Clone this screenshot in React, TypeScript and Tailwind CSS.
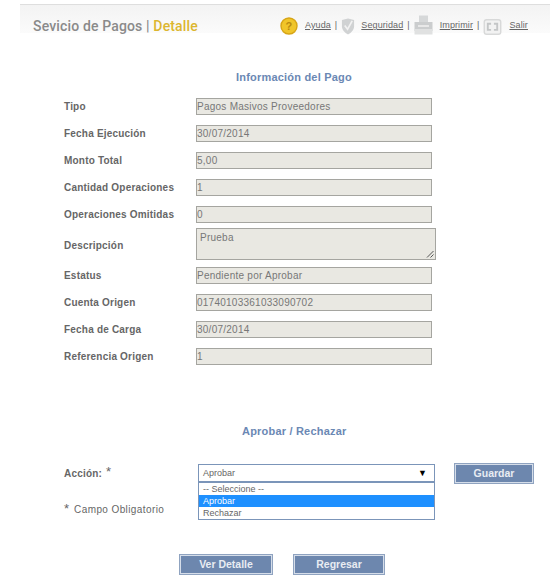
const fields = [
  { label: 'Tipo', value: 'Pagos Masivos Proveedores' },
  { label: 'Fecha Ejecución', value: '30/07/2014' },
  { label: 'Monto Total', value: '5,00' },
  { label: 'Cantidad Operaciones', value: '1' },
  { label: 'Operaciones Omitidas', value: '0' },
];

const fieldsAfter = [
  { label: 'Estatus', value: 'Pendiente por Aprobar' },
  { label: 'Cuenta Origen', value: '01740103361033090702' },
  { label: 'Fecha de Carga', value: '30/07/2014' },
  { label: 'Referencia Origen', value: '1' },
];

function Field({ label, value }: { label: string; value: string }) {
  return (
    <div className="flex items-center h-[17px]">
      <div className="w-[132px] text-[10px] font-bold text-[#666] tracking-[0.2px]">{label}</div>
      <div className="w-[236px] h-[17px] bg-[#e9e8e2] border border-[#a5a5a0] text-[10px] leading-[15px] text-[#777] tracking-[0.25px] overflow-hidden">
        {value}
      </div>
    </div>
  );
}

function PageButton({ label, width }: { label: string; width: string }) {
  return (
    <button
      type="button"
      className={`${width} h-[21px] block bg-[#6d87ae] border-2 border-[#d5dde9] outline outline-1 outline-[#8fa3c0] -outline-offset-1 text-[10.5px] font-bold text-[#e8ecf2] leading-none`}
    >
      {label}
    </button>
  );
}

export default function App() {
  return (
    <div className="w-[550px] h-[581px] bg-white overflow-hidden font-['Liberation_Sans',Arial,sans-serif]">
      <div className="ml-[20px] mt-[4px] h-[29px] border-t border-[#dedede] bg-gradient-to-b from-[#f3f3f3] to-[#fbfbfb] flex">
        <div className="pl-[13px] pt-[11px] w-[260px] text-[14px] font-medium tracking-[0.15px] leading-[20px] text-[#8a8a8a] font-['Roboto',sans-serif] whitespace-nowrap">
          Sevicio de Pagos | <span className="text-[#dcb62f]">Detalle</span>
        </div>
        <div className="flex items-start pt-[12px] text-[9px] tracking-[0.1px] text-[#666]">
          <svg width="18" height="18" viewBox="0 0 18 18" className="shrink-0">
            <circle cx="9" cy="9" r="8" fill="#f0c52a" stroke="#d7a516" strokeWidth="1.4" />
            <text x="9" y="13" textAnchor="middle" fontSize="11" fontWeight="700" fill="#b98a10" fontFamily="Liberation Sans">?</text>
          </svg>
          <a className="underline ml-[7px] mt-[2px] leading-[12px]">Ayuda</a>
          <span className="ml-[4px] mt-[2px] leading-[12px]">|</span>
          <svg width="14" height="17" viewBox="0 0 15 18" className="ml-[4px] mt-[1px] shrink-0">
            <path d="M1 2 L7.5 0.5 L14 2 V9 C14 13 10.5 16 7.5 17.5 C4.5 16 1 13 1 9 Z" fill="#d0d2d3" />
            <path d="M4 8 L7 12 L12 3" fill="none" stroke="#f2f2f2" strokeWidth="1.8" />
          </svg>
          <a className="underline ml-[6px] mt-[2px] leading-[12px]">Seguridad</a>
          <span className="ml-[4px] mt-[2px] leading-[12px]">|</span>
          <svg width="19" height="20" viewBox="0 0 19 20" className="ml-[4px] -mt-[2px] shrink-0">
            <rect x="5" y="0.5" width="9" height="8" fill="#d6d8d9" />
            <rect x="0.5" y="7" width="18" height="9" fill="#cbcdce" />
            <rect x="0.5" y="14" width="18" height="5.5" fill="#e0e1e1" />
            <rect x="4" y="10" width="11" height="2" fill="#e8e8e8" />
          </svg>
          <a className="underline ml-[7px] mt-[2px] leading-[12px]">Imprimir</a>
          <span className="ml-[4px] mt-[2px] leading-[12px]">|</span>
          <svg width="19" height="16" viewBox="0 0 19 17" className="ml-[4px] mt-[2px] shrink-0">
            <rect x="0.75" y="0.75" width="17.5" height="15.5" rx="2.5" fill="#f2f2f2" stroke="#d8d9d9" strokeWidth="1.5" />
            <path d="M8 5 H4.5 V11.5 H8 M11 5 H14.5 V11.5 H11" fill="none" stroke="#c4c6c7" strokeWidth="2" />
          </svg>
          <a className="underline ml-[7px] mt-[2px] leading-[12px]">Salir</a>
        </div>
      </div>

      <div className="pt-[36px] pl-[64px]">
        <h2 className="ml-[172px] h-[17px] text-[11px] font-bold leading-[17px] text-[#6b88b4] tracking-[0.2px] whitespace-nowrap">
          Información del Pago
        </h2>
        <div className="mt-[12px] flex flex-col gap-[10px]">
          {fields.map((f) => (
            <Field key={f.label} label={f.label} value={f.value} />
          ))}
        </div>
        <div className="mt-[5px] flex items-center h-[32px]">
          <div className="w-[132px] pt-[2px] text-[10px] font-bold text-[#666] tracking-[0.2px]">Descripción</div>
          <div className="relative w-[240px] h-[32px] bg-[#e9e8e2] border border-[#a5a5a0] pl-[3px] pt-[1px] text-[10px] leading-[15px] text-[#777] tracking-[0.25px]">
            Prueba
            <svg width="8" height="8" viewBox="0 0 8 8" className="absolute right-[1px] bottom-[1px]">
              <path d="M1 7.5 L7.5 1 M4.5 7.5 L7.5 4.5" stroke="#555" strokeWidth="1" />
            </svg>
          </div>
        </div>
        <div className="mt-[7px] flex flex-col gap-[10px]">
          {fieldsAfter.map((f) => (
            <Field key={f.label} label={f.label} value={f.value} />
          ))}
        </div>

        <h2 className="mt-[58px] ml-[178px] h-[17px] text-[11px] font-bold leading-[17px] text-[#6b88b4] tracking-[0.2px] whitespace-nowrap">
          Aprobar / Rechazar
        </h2>

        <div className="mt-[24px] flex items-start h-[20px]">
          <div className="w-[134px] pt-[3px] text-[10px] font-bold leading-[14px] text-[#666] tracking-[0.2px]">
            Acción:<span className="ml-[4px] text-[13px] font-normal leading-[10px] align-[1px]">*</span>
          </div>
          <div className="relative w-[237px] h-[18px] bg-white border border-[#7b95b9] flex items-center justify-between pl-[4px] pr-[7px] pt-[1px] text-[9px] text-[#666]">
            Aprobar
            <span className="text-[9px] text-black leading-none">▼</span>
            <div className="absolute left-[-1px] top-[17px] w-[237px] h-[38px] bg-white border border-[#7b95b9] text-[9px] leading-[12px] text-[#666]">
              <div className="pl-[4px] h-[12px]">-- Seleccione --</div>
              <div className="pl-[4px] h-[12px] bg-[#1e90ff] text-white">Aprobar</div>
              <div className="pl-[4px] h-[12px]">Rechazar</div>
            </div>
          </div>
          <div className="ml-[19px] -mt-[1px] flex">
            <PageButton label="Guardar" width="w-[80px]" />
          </div>
        </div>

        <div className="mt-[19px] text-[10px] leading-[14px] text-[#666] tracking-[0.4px]">
          <span className="mr-[5px] text-[13px] leading-[10px] tracking-normal">*</span>Campo Obligatorio
        </div>

        <div className="mt-[37px] ml-[115px] flex gap-[20px]">
          <PageButton label="Ver Detalle" width="w-[94px]" />
          <PageButton label="Regresar" width="w-[92px]" />
        </div>
      </div>
    </div>
  );
}
